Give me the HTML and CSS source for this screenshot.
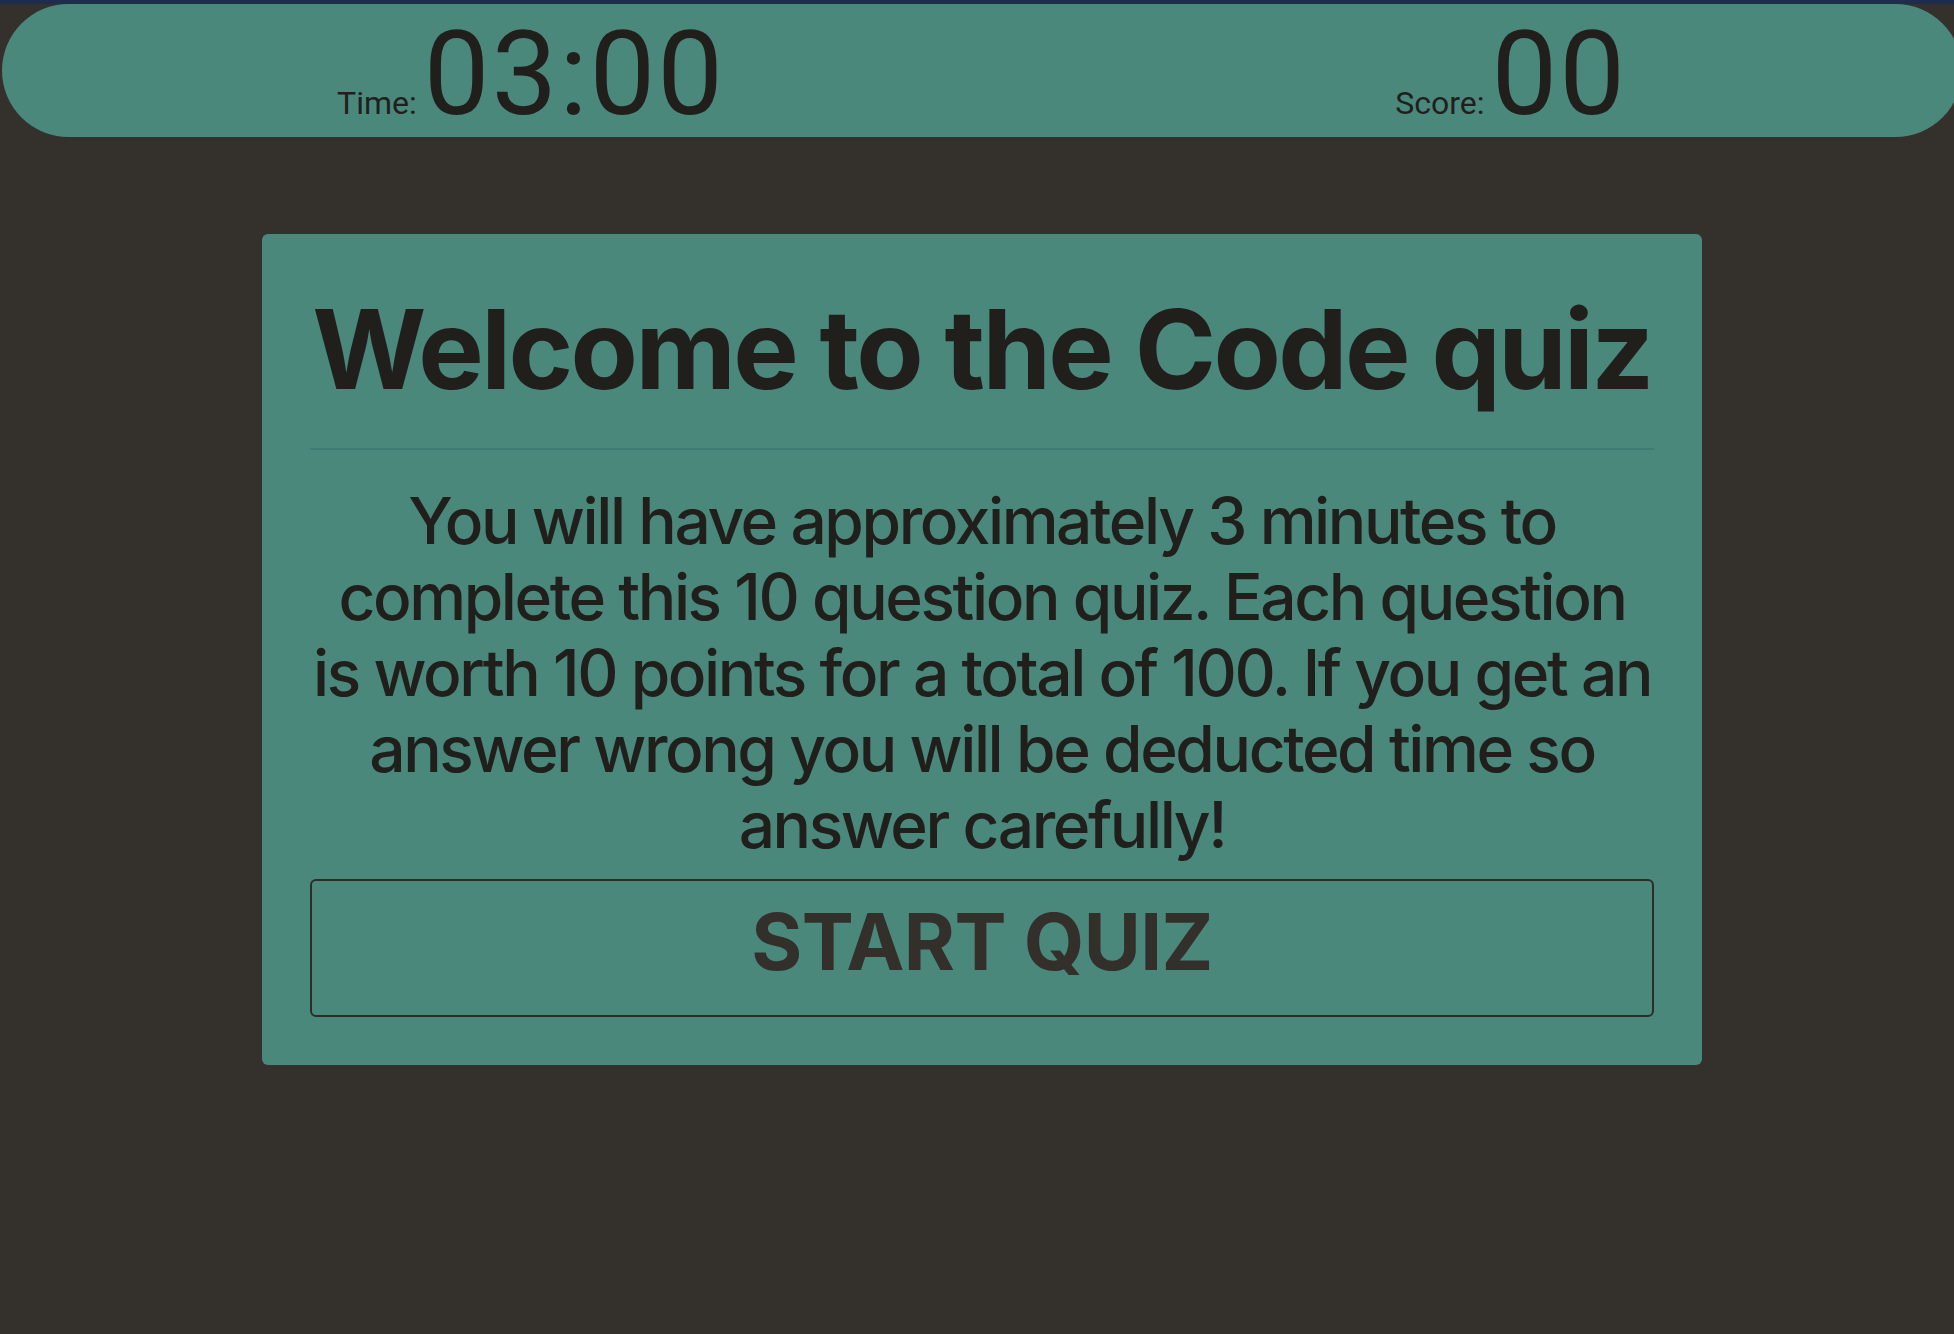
FILE: index.html
```html
<!DOCTYPE html>
<html lang="en">
<head>
<meta charset="utf-8">
<title>Code Quiz</title>
<link rel="stylesheet" href="styles.css">
</head>
<body>
  <div class="page">
    <header class="scorebar">
      <div class="stat">
        <span class="stat-label">Time:</span>
        <span class="stat-value">03:00</span>
      </div>
      <div class="stat">
        <span class="stat-label">Score:</span>
        <span class="stat-value">00</span>
      </div>
    </header>
    <main class="card">
      <h1 class="card-title">Welcome to the Code quiz</h1>
      <hr class="card-divider">
      <p class="card-text">You will have approximately 3 minutes to complete this 10 question quiz. Each question is worth 10 points for a total of 100. If you get an answer wrong you will be deducted time so answer carefully!</p>
      <button class="start-btn" type="button">START QUIZ</button>
    </main>
  </div>
</body>
</html>
```
FILE: styles.css
```css
html, body {
  margin: 0;
  padding: 0;
  overflow: hidden;
}

body {
  background: #34302c;
  border-top: 4px solid #1e2d4e;
  min-height: 1330px;
  font-family: Inter, "Liberation Sans", sans-serif;
  color: #211f1c;
}

.page {
  width: 1964px;
}

.scorebar {
  margin-left: 2px;
  width: 1960px;
  height: 133px;
  box-sizing: border-box;
  background: #4a887c;
  border-radius: 67px;
  display: flex;
  justify-content: space-around;
  align-items: flex-start;
}

.stat {
  display: flex;
  align-items: baseline;
  gap: 7px;
  padding-top: 12px;
  font-family: Roboto, "Liberation Sans", sans-serif;
  color: #211f1c;
}

.stat-label {
  font-size: 32px;
  font-weight: 400;
}

.stat-value {
  font-size: 117px;
  line-height: 117px;
  font-weight: 400;
  letter-spacing: 2px;
}

.card {
  display: block;
  width: 1344px;
  margin: 97px auto 0;
  padding: 48px;
  background: #4a887c;
  border-radius: 6px;
}

.card-title {
  margin: 0;
  font-size: 110px;
  font-weight: 700;
  line-height: normal;
  letter-spacing: -2.6px;
  white-space: nowrap;
  text-align: center;
  color: #211f1c;
}

.card-divider {
  margin: 32px 0 0;
  border: 0;
  height: 2px;
  background: #3f7b70;
}

.card-text {
  margin: 33px 0 0;
  font-size: 64px;
  font-weight: 500;
  line-height: 76px;
  letter-spacing: -2.4px;
  text-align: center;
  color: #211f1c;
}

.start-btn {
  display: flex;
  align-items: center;
  justify-content: center;
  width: 100%;
  height: 138px;
  margin-top: 16px;
  padding: 0 0 13px;
  box-sizing: border-box;
  background: transparent;
  border: 2px solid #2f2c28;
  border-radius: 6px;
  font-family: Inter, "Liberation Sans", sans-serif;
  font-size: 78px;
  font-weight: 700;
  letter-spacing: -0.6px;
  color: #33302b;
}
```
